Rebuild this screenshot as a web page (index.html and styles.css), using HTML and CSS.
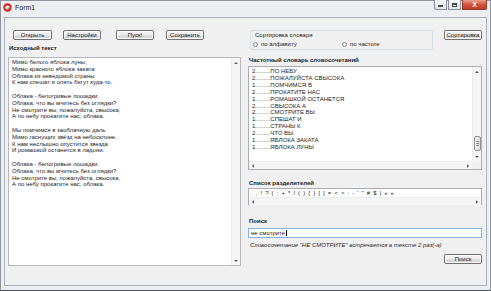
FILE: index.html
```html
<!DOCTYPE html>
<html lang="ru">

<head>
    <meta charset="utf-8">
    <title>Form1</title>
    <link rel="stylesheet" href="styles.css">
</head>

<body>

    <div class="window">
        <div class="titlebar">
            <svg class="app-icon" width="9" height="9" viewBox="0 0 9 9">
                <circle cx="4.5" cy="4.5" r="4.2" fill="#d3261c"/>
                <circle cx="4.5" cy="4.5" r="2.1" fill="#fff"/>
                <circle cx="5.2" cy="5.2" r="0.9" fill="#9a9a9a"/>
            </svg>
            <span class="title">Form1</span>
            <div class="caption">
                <div class="cap cap-min"><i></i></div>
                <div class="cap cap-max"><i></i></div>
                <div class="cap cap-close">X</div>
            </div>
        </div>

        <div class="client">
            <!-- левая колонка -->
            <div class="col-left">
                <div class="toolbar">
                    <button class="btn">Открыть</button>
                    <button class="btn">Настройки</button>
                    <button class="btn">Пуск!</button>
                    <button class="btn">Сохранить</button>
                </div>
                <div class="label">Исходный текст</div>
                <div class="source">
                    <div class="source-text">Мимо белого яблока луны,
Мимо красного яблока заката
Облака из неведомой страны
К нам спешат и опять бегут куда-то.

Облака - белогривые лошадки.
Облака, что вы мчитесь без оглядки?
Не смотрите вы, пожалуйста, свысока,
А по небу прокатите нас, облака.

Мы помчимся в заоблачную даль
Мимо гаснущих звёзд на небосклоне.
К нам неслышно опустится звезда
И ромашкой останется в ладони.

Облака - белогривые лошадки.
Облака, что вы мчитесь без оглядки?
Не смотрите вы, пожалуйста, свысока,
А по небу прокатите нас, облака.</div>
                    <div class="vscroll">
                        <div class="sbtn"><i class="arr-up"></i></div>
                        <div class="sbtn"><i class="arr-down"></i></div>
                    </div>
                </div>
            </div>

            <!-- правая колонка -->
            <div class="col-right">
                <div class="sort-row">
                    <div class="group">
                        <div class="group-title">Сортировка словаря</div>
                        <div class="radios">
                            <span class="radio"><i class="dot"></i>по алфавиту</span>
                            <span class="radio"><i class="dot"></i>по частоте</span>
                        </div>
                    </div>
                    <button class="btn btn-sort">Сортировка</button>
                </div>

                <div class="label label-dict">Частотный словарь словосочетаний</div>
                <div class="listbox">
                    <div class="items">
                        <div>2.........ПО НЕБУ</div>
                        <div>2.........ПОЖАЛУЙСТА СВЫСОКА</div>
                        <div>1.........ПОМЧИМСЯ В</div>
                        <div>2.........ПРОКАТИТЕ НАС</div>
                        <div>1.........РОМАШКОЙ ОСТАНЕТСЯ</div>
                        <div>2.........СВЫСОКА А</div>
                        <div>2.........СМОТРИТЕ ВЫ</div>
                        <div>1.........СПЕШАТ И</div>
                        <div>1.........СТРАНЫ К</div>
                        <div>2.........ЧТО ВЫ</div>
                        <div>1.........ЯБЛОКА ЗАКАТА</div>
                        <div>1.........ЯБЛОКА ЛУНЫ</div>
                    </div>
                    <div class="vscroll">
                        <div class="sbtn"><i class="arr-up"></i></div>
                        <div class="thumb"></div>
                        <div class="sbtn"><i class="arr-down"></i></div>
                    </div>
                    <div class="hscroll">
                        <div class="sbtn"><i class="arr-left"></i></div>
                        <div class="sbtn"><i class="arr-right"></i></div>
                    </div>
                    <div class="corner"></div>
                </div>

                <div class="label label-delim">Список разделителей</div>
                <div class="delims">
                    <div class="delims-text">. , ! ? ( ; + * / ( ) { } [ ] = &lt; &gt; : - ' " # $ | « »</div>
                    <div class="hscroll">
                        <div class="sbtn"><i class="arr-left"></i></div>
                        <div class="sbtn"><i class="arr-right"></i></div>
                    </div>
                </div>

                <div class="label label-search">Поиск</div>
                <div class="input">не смотрите<span class="caret"></span></div>
                <div class="result">Словосочетание "НЕ СМОТРИТЕ" встречается в тексте 2 раз(-а)</div>
                <button class="btn btn-search">Поиск</button>
            </div>
        </div>
    </div>

</body>

</html>
```

FILE: styles.css
```css
* {
    box-sizing: border-box;
}
body {
    margin: 0;
    font-family: "Liberation Sans", Arial, sans-serif;
    font-size: 6px;
    color: #1c1c1c;
    background: #fff;
}
.window {
    width: 491px;
    height: 291px;
    display: flex;
    flex-direction: column;
    padding: 0 3px 4px 3px;
    border: 1px solid #8e949b;
    border-bottom-color: #4d5258;
    background: #eceef1;
}
.titlebar {
    height: 16px;
    display: flex;
    align-items: flex-start;
}
.app-icon {
    margin: 2px 0 0 -1px;
}
.title {
    margin: 2px 0 0 3px;
    font-size: 7px;
    line-height: 10px;
    color: #1e1e1e;
}
.caption {
    margin: -1px 0 0 auto;
    display: flex;
    gap: 1px;
}
.cap {
    height: 10px;
    width: 13px;
    display: flex;
    align-items: center;
    justify-content: center;
    border: 1px solid #8a919b;
    border-top: none;
    background: linear-gradient(#f7f8fa, #dde1e6);
}
.cap-min {
    border-radius: 0 0 0 2px;
}
.cap-min i {
    width: 5px;
    height: 2px;
    margin-top: 3px;
    background: #4a4f55;
}
.cap-max i {
    width: 5px;
    height: 4px;
    border: 1px solid #4a4f55;
    border-top-width: 2px;
}
.cap-close {
    width: 25px;
    border-color: #8d3a2c;
    border-radius: 0 0 2px 0;
    background: linear-gradient(#e9a08f, #d0563f 50%, #c13a22);
    color: #fff;
    font-weight: bold;
    font-size: 7px;
    line-height: 8px;
}

/* клиентская область */
.client {
    flex: 1;
    display: flex;
    gap: 7px;
    padding: 12px 3px 0 3px;
    border: 1px solid #a9b2bc;
    background: #f0f0f0;
}
.col-left {
    width: 233px;
    display: flex;
    flex-direction: column;
}
.col-right {
    width: 235px;
    display: flex;
    flex-direction: column;
}
.btn {
    height: 10px;
    width: 38px;
    padding: 0;
    font-family: inherit;
    font-size: 6px;
    line-height: 8px;
    color: #1c1c1c;
    border: 1px solid #707070;
    border-radius: 2px;
    background: linear-gradient(#f4f4f4, #ebebeb 50%, #dddddd 51%, #d2d2d2);
    box-shadow: inset 0 0 0 1px #fbfbfb;
}
.toolbar {
    height: 10px;
    display: flex;
}
.toolbar .btn:first-child {
    margin-left: 5px;
    width: 39px;
}
.toolbar .btn:nth-child(2) {
    margin-left: 11px;
}
.toolbar .btn:nth-child(3) {
    margin-left: 15px;
}
.toolbar .btn:nth-child(4) {
    margin-left: 12px;
}
.label {
    font-weight: bold;
    line-height: 8px;
    padding-left: 1px;
    margin: 4px 0 5px;
}
.source {
    height: 209px;
    display: flex;
    border: 1px solid #b5b8bd;
    background: #fff;
}
.source-text {
    flex: 1;
    padding: 1px 0 0 3px;
    line-height: 6.8px;
    white-space: pre-line;
}

/* полосы прокрутки */
.vscroll {
    width: 9px;
    display: flex;
    flex-direction: column;
    justify-content: space-between;
    background: #f5f5f5;
    border-left: 1px solid #ececec;
}
.hscroll {
    height: 8px;
    display: flex;
    justify-content: space-between;
    background: #f5f5f5;
    border-top: 1px solid #ececec;
}
.sbtn {
    width: 8px;
    height: 8px;
    display: flex;
    align-items: center;
    justify-content: center;
}
.vscroll .sbtn {
    height: 9px;
}
.arr-up,
.arr-down,
.arr-left,
.arr-right {
    width: 0;
    height: 0;
}
.arr-up {
    border-left: 2px solid transparent;
    border-right: 2px solid transparent;
    border-bottom: 2px solid #5d5d5d;
}
.arr-down {
    border-left: 2px solid transparent;
    border-right: 2px solid transparent;
    border-top: 2px solid #5d5d5d;
}
.arr-left {
    border-top: 2px solid transparent;
    border-bottom: 2px solid transparent;
    border-right: 2px solid #5d5d5d;
}
.arr-right {
    border-top: 2px solid transparent;
    border-bottom: 2px solid transparent;
    border-left: 2px solid #5d5d5d;
}
.thumb {
    margin: auto 0 1px 1px;
    width: 7px;
    height: 15px;
    border: 1px solid #969696;
    border-radius: 2px;
    background:
        linear-gradient(#8a8a8a, #8a8a8a) center 4px / 3px 1px no-repeat,
        linear-gradient(#8a8a8a, #8a8a8a) center 6px / 3px 1px no-repeat,
        linear-gradient(#8a8a8a, #8a8a8a) center 8px / 3px 1px no-repeat,
        linear-gradient(to right, #f3f3f3, #d9d9d9);
}

/* сортировка */
.sort-row {
    height: 20px;
    display: flex;
    padding-left: 2px;
}
.group {
    width: 183px;
    height: 20px;
    padding: 1px 0 0 4px;
    border: 1px solid #d5dfe5;
    border-radius: 2px;
}
.group-title {
    line-height: 6px;
    color: #222;
}
.radios {
    display: flex;
    margin: 3px 0 0 -2px;
    line-height: 6px;
}
.radio {
    width: 89px;
    display: flex;
    align-items: center;
    gap: 3px;
}
.dot {
    width: 5px;
    height: 5px;
    border-radius: 50%;
    border: 1px solid #8e8f8f;
    background: radial-gradient(#ffffff, #dcdcdc);
}
.btn-sort {
    margin: 0 1px 0 auto;
}

/* словарь */
.label-dict {
    margin: 6px 0 2px;
}
.listbox {
    width: 234px;
    height: 104px;
    display: grid;
    grid-template-columns: 1fr 9px;
    grid-template-rows: 1fr 8px;
    border: 1px solid #abadb3;
    background: #fff;
}
.items {
    padding: 1px 0 0 3px;
    line-height: 6.9px;
}
.corner {
    background: #f0f0f0;
}
.label-delim {
    margin: 9px 0 1px;
}
.delims {
    width: 234px;
    height: 17px;
    display: flex;
    flex-direction: column;
    border: 1px solid #abadb3;
    background: #fff;
}
.delims-text {
    flex: 1;
    padding-left: 2px;
    line-height: 8px;
    letter-spacing: 0.7px;
}
.label-search {
    margin: 12px 0 3px;
}
.input {
    width: 234px;
    height: 10px;
    padding-left: 2px;
    line-height: 8px;
    border: 1px solid #7eb4ea;
    background: #fff;
}
.caret {
    display: inline-block;
    width: 1px;
    height: 6px;
    margin-left: 1px;
    vertical-align: -1px;
    background: #000;
}
.result {
    margin-top: 3px;
    padding-left: 2px;
    line-height: 8px;
    font-style: italic;
    color: #2a2a2a;
}
.btn-search {
    margin: 5px 1px 0 auto;
}
```
